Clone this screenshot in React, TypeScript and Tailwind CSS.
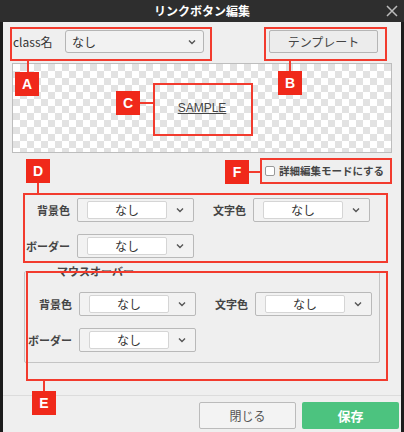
const font = { fontFamily: '"Noto Sans CJK JP", "Noto Sans", sans-serif' };

function Chevron() {
  return (
    <svg width="10" height="10" viewBox="0 0 10 10" className="shrink-0">
      <path d="M2 3.5 L5 6.5 L8 3.5" fill="none" stroke="#555" strokeWidth="1.4" />
    </svg>
  );
}

function ColorSelect() {
  return (
    <div className="w-[117px] h-[24px] border border-[#b9b9b9] rounded-[2px] bg-[#f2f2f2] flex items-center pl-[9px] pr-[7px] gap-[8px]">
      <div className="w-[80px] h-[18px] bg-white border border-[#d5d5d5] rounded-[2px] flex items-center justify-center text-[12px] text-[#333]">なし</div>
      <Chevron />
    </div>
  );
}

function Field({ label, lw }: { label: string; lw: string }) {
  return (
    <div className="flex items-center gap-[7px]">
      <span className={`${lw} text-right text-[11px] font-bold text-[#444] whitespace-nowrap`}>{label}</span>
      <ColorSelect />
    </div>
  );
}

function Rows() {
  return (
    <div className="flex flex-col gap-[12px]">
      <div className="flex items-center gap-[14px]">
        <Field label="背景色" lw="w-[44px]" />
        <Field label="文字色" lw="w-[38px]" />
      </div>
      <Field label="ボーダー" lw="w-[44px]" />
    </div>
  );
}

function Tag({ t, cls }: { t: string; cls: string }) {
  return (
    <div className={`absolute w-[24px] h-[24px] bg-[#f0291a] text-white font-bold text-[14px] flex items-center justify-center ${cls}`} style={{ fontFamily: '"Liberation Sans", sans-serif' }}>
      {t}
    </div>
  );
}

export default function App() {
  return (
    <div className="relative w-[404px] h-[432px] bg-[#1c1c1c] overflow-hidden" style={font}>
      <div className="h-[22px] bg-[#2e2e2e] flex items-center justify-center relative">
        <span className="text-white text-[12px] font-bold">リンクボタン編集</span>
        <svg className="absolute right-[5px] top-[4px]" width="14" height="14" viewBox="0 0 14 14">
          <path d="M2 2 L12 12 M12 2 L2 12" stroke="#bbb" strokeWidth="1.5" />
        </svg>
      </div>
      <div className="mx-[3px] h-[410px] bg-[#efefef] flex flex-col">
        <div className="flex items-center h-[41px] pt-[8px] pb-[10px]">
          <span className="ml-[10px] text-[12px] text-[#333] w-[52px]">class名</span>
          <div className="w-[139px] h-[23px] border border-[#b5b5b5] rounded-[3px] bg-[#f2f2f2] flex items-center justify-between px-[6px] text-[12px] text-[#333]">
            <span>なし</span>
            <Chevron />
          </div>
          <div className="ml-[65px] w-[109px] h-[23px] border border-[#b5b5b5] rounded-[2px] bg-[#ececec] flex items-center justify-center text-[12px] text-[#444]">テンプレート</div>
        </div>
        <div
          className="mx-[9px] h-[90px] border border-[#bdbdbd] flex items-center justify-center"
          style={{ backgroundColor: '#fff', backgroundImage: 'linear-gradient(45deg,#e2e2e2 25%,transparent 25%,transparent 75%,#e2e2e2 75%),linear-gradient(45deg,#e2e2e2 25%,transparent 25%,transparent 75%,#e2e2e2 75%)', backgroundSize: '14px 14px', backgroundPosition: '0 0,7px 7px' }}
        >
          <span className="text-[12px] text-[#444] underline" style={{ fontFamily: '"Liberation Sans", sans-serif' }}>SAMPLE</span>
        </div>
        <div className="flex justify-end items-center h-[38px] pr-[17px] pb-[2px]">
          <div className="flex items-center gap-[4px]">
            <div className="w-[10px] h-[10px] border border-[#999] rounded-[2px] bg-white" />
            <span className="text-[10.5px] font-bold text-[#444]">詳細編集モードにする</span>
          </div>
        </div>
        <div className="ml-[23px] pt-[7px] h-[80px]">
          <Rows />
        </div>
        <div className="mx-[21px] h-[92px] border border-[#c4c4c4] rounded-[2px] relative pt-[20px] pl-[3px]">
          <span className="absolute -top-[9px] left-[16px] bg-[#efefef] px-[16px] text-[11px] font-bold text-[#444]">マウスオーバー</span>
          <Rows />
        </div>
        <div className="flex-1" />
        <div className="border-t border-[#dcdcdc] h-[37px] flex items-start justify-end gap-[6px] pt-[6px] pr-[2px]">
          <div className="w-[97px] h-[27px] border border-[#bbb] rounded-[2px] bg-[#f3f3f3] flex items-center justify-center text-[12px] text-[#555]">閉じる</div>
          <div className="w-[97px] h-[27px] rounded-[2px] bg-[#4cc37f] flex items-center justify-center text-[13px] font-bold text-white">保存</div>
        </div>
      </div>

      {/* annotations */}
      <div className="absolute left-[10px] top-[27px] w-[202px] h-[34px] border-2 border-[#f23b2e]" />
      <div className="absolute left-[264px] top-[27px] w-[123px] h-[34px] border-2 border-[#f23b2e]" />
      <div className="absolute left-[27px] top-[61px] w-[2px] h-[12px] bg-[#f23b2e]" />
      <Tag t="A" cls="left-[15px] top-[72px]" />
      <div className="absolute left-[289px] top-[61px] w-[2px] h-[10px] bg-[#f23b2e]" />
      <Tag t="B" cls="left-[278px] top-[71px]" />
      <div className="absolute left-[153px] top-[83px] w-[100px] h-[53px] border-2 border-[#f23b2e]" />
      <div className="absolute left-[137px] top-[102px] w-[16px] h-[2px] bg-[#f23b2e]" />
      <Tag t="C" cls="left-[116px] top-[91px]" />
      <div className="absolute left-[260px] top-[158px] w-[132px] h-[26px] border-2 border-[#f23b2e]" />
      <div className="absolute left-[249px] top-[171px] w-[11px] h-[2px] bg-[#f23b2e]" />
      <Tag t="F" cls="left-[225px] top-[160px]" />
      <Tag t="D" cls="left-[26px] top-[159px]" />
      <div className="absolute left-[37px] top-[183px] w-[2px] h-[10px] bg-[#f23b2e]" />
      <div className="absolute left-[23px] top-[193px] w-[365px] h-[70px] border-2 border-[#f23b2e]" />
      <div className="absolute left-[26px] top-[271px] w-[362px] h-[110px] border-2 border-[#f23b2e]" />
      <div className="absolute left-[43px] top-[381px] w-[2px] h-[10px] bg-[#f23b2e]" />
      <Tag t="E" cls="left-[32px] top-[391px]" />
    </div>
  );
}
